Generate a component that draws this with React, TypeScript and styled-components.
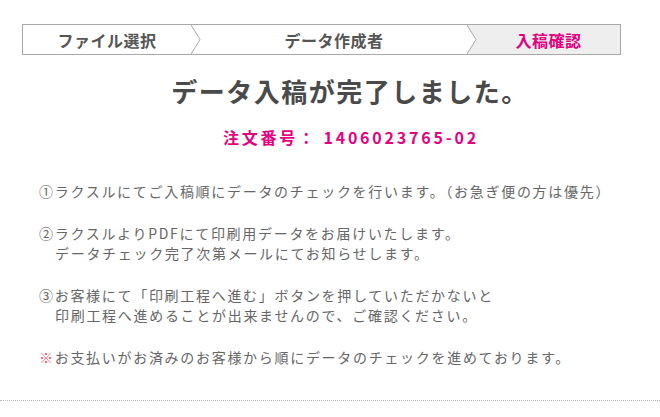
import styled, { createGlobalStyle } from "styled-components";

const GlobalStyle = createGlobalStyle`
  body {
    margin: 0;
    background: #fff;
    font-family: "Noto Sans CJK JP", "Noto Sans", sans-serif;
  }
`;

type StepProps = { $active?: boolean };

const steps = [
  { label: "ファイル選択", width: 168 },
  { label: "データ作成者", width: 266 },
  { label: "入稿確認", width: 0, active: true },
];

const Chevron = ({ fillRight }: { fillRight?: string }) => (
  <ChevronSvg width="10" height="29" viewBox="0 0 10 29">
    {fillRight && (
      <polygon points="0,0 9,14.5 0,29 10,29 10,0" fill={fillRight} />
    )}
    <polyline
      points="0,0 9,14.5 0,29"
      fill="none"
      stroke="#a8a8a8"
      strokeWidth="1"
    />
  </ChevronSvg>
);

const App = () => {
  return (
    <Page>
      <GlobalStyle />
      <Stepper>
        {steps.map((step, i) => (
          <StepGroup key={step.label} $grow={!step.width}>
            <Step
              $active={step.active}
              style={step.width ? { width: step.width } : undefined}
            >
              {step.label}
            </Step>
            {i < steps.length - 1 && (
              <Chevron fillRight={steps[i + 1].active ? "#eeeeee" : undefined} />
            )}
          </StepGroup>
        ))}
      </Stepper>

      <Title>データ入稿が完了しました。</Title>
      <OrderNo>注文番号： 1406023765-02</OrderNo>

      <Notes>
        <Note>①ラクスルにてご入稿順にデータのチェックを行います。（お急ぎ便の方は優先）</Note>
        <Note>
          ②ラクスルよりPDFにて印刷用データをお届けいたします。
          <br />
          データチェック完了次第メールにてお知らせします。
        </Note>
        <Note>
          ③お客様にて「印刷工程へ進む」ボタンを押していただかないと
          <br />
          印刷工程へ進めることが出来ませんので、ご確認ください。
        </Note>
        <Note>
          <Mark>※</Mark>お支払いがお済みのお客様から順にデータのチェックを進めております。
        </Note>
      </Notes>

      <Divider />
    </Page>
  );
};

const Page = styled.div`
  width: 660px;
  height: 417px;
  padding-top: 24px;
  box-sizing: border-box;
  overflow: hidden;
`;

const Stepper = styled.div`
  margin-left: 22px;
  width: 599px;
  height: 31px;
  box-sizing: border-box;
  border: 1px solid #a8a8a8;
  display: flex;
`;

const StepGroup = styled.div<{ $grow?: boolean }>`
  display: flex;
  flex: ${(p) => (p.$grow ? "1" : "none")};
`;

const Step = styled.div<StepProps>`
  flex: 1;
  display: flex;
  align-items: center;
  justify-content: center;
  font-size: 16px;
  font-weight: bold;
  letter-spacing: 0.5px;
  color: ${(p) => (p.$active ? "#e4007f" : "#555")};
  background: ${(p) => (p.$active ? "#eeeeee" : "#fff")};
`;

const ChevronSvg = styled.svg`
  display: block;
  flex: none;
`;

const Title = styled.h1`
  margin: 18px 0 0 28px;
  width: 644px;
  text-align: center;
  font-size: 26px;
  line-height: 36px;
  font-weight: bold;
  letter-spacing: 1.5px;
  color: #4a4a4a;
`;

const OrderNo = styled.p`
  margin: 17px 0 0 22px;
  width: 658px;
  text-align: center;
  font-size: 16px;
  line-height: 22px;
  font-weight: bold;
  letter-spacing: 2.8px;
  color: #e4007f;
`;

const Notes = styled.div`
  margin-top: 33px;
  padding-left: 39px;
  display: flex;
  flex-direction: column;
  gap: 22px;
`;

const Note = styled.p`
  margin: 0;
  padding-left: 16px;
  text-indent: -16px;
  font-size: 14px;
  line-height: 20px;
  letter-spacing: 1.7px;
  color: #666;
  white-space: nowrap;
`;

const Mark = styled.span`
  color: #f0506e;
`;

const Divider = styled.hr`
  margin: 33px 0 0;
  border: none;
  border-top: 1px dotted #b8b8b8;
`;

export default App;
